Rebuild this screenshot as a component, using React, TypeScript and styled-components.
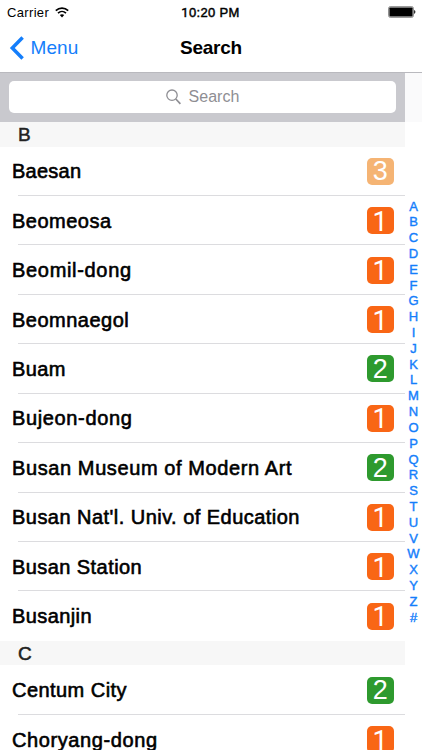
import React from 'react';
import styled, { createGlobalStyle } from 'styled-components';

const GlobalStyle = createGlobalStyle`
  *, *::before, *::after { box-sizing: border-box; }
  body {
    margin: 0;
    background: #fff;
    color: #000;
    font-family: 'Liberation Sans', Arial, sans-serif;
    overflow: hidden;
  }
`;

const Screen = styled.div`
  display: flex;
  flex-direction: column;
  width: 422px;
  height: 750px;
  overflow: hidden;
  background: #fff;
`;

const Top = styled.header`
  flex: none;
  height: 73px;
  border-bottom: 1px solid #b9b9be;
`;

const StatusBar = styled.div`
  display: grid;
  grid-template-columns: 1fr auto 1fr;
  align-items: center;
  height: 24px;
  padding: 0 6px 0 7px;
`;

const Carrier = styled.div`
  display: flex;
  align-items: center;
  gap: 6px;
  font-size: 13px;
  letter-spacing: 0.34px;
`;

const Time = styled.div`
  margin-left: -2px;
  font-size: 13px;
  letter-spacing: 0.35px;
  -webkit-text-stroke: 0.45px #000;
`;

const One = styled.span`
  font-family: Roboto, sans-serif;
`;

const BatterySlot = styled.div`
  display: flex;
  justify-content: flex-end;
`;

const NavBar = styled.nav`
  display: grid;
  grid-template-columns: 1fr auto 1fr;
  align-items: center;
  height: 48px;
  padding: 0 9px;
`;

const Back = styled.a`
  display: flex;
  align-items: center;
  gap: 6.5px;
  color: #147efb;
  font-size: 19px;
  letter-spacing: 0.1px;
`;

const Title = styled.h1`
  margin: 0;
  font-size: 19px;
  line-height: 22px;
  font-weight: 700;
  letter-spacing: -0.25px;
`;

const Body = styled.div`
  display: flex;
  flex: 1;
  min-height: 0;
`;

const List = styled.main`
  width: 405px;
  overflow: hidden;
`;

const SearchBar = styled.div`
  height: 49px;
  padding: 8px 9px 9px;
  background: #c9c9ce;
`;

const SearchField = styled.div`
  display: flex;
  align-items: center;
  justify-content: center;
  gap: 8px;
  height: 32px;
  border-radius: 5px;
  background: #fff;
  color: #8e8e93;
  font-size: 16px;
  letter-spacing: 0.05px;
`;

const SectionHeader = styled.h2`
  height: 24.5px;
  margin: 0;
  padding-left: 18px;
  background: #f7f7f7;
  color: #222;
  font-size: 19px;
  line-height: 26px;
  font-weight: 400;
  -webkit-text-stroke: 0.5px #222;
`;

const Station = styled.div`
  position: relative;
  display: flex;
  align-items: center;
  justify-content: space-between;
  height: 49.45px;
  padding: 0 11.3px 0 12px;

  &:not(:last-child)::after {
    content: '';
    position: absolute;
    right: 0;
    bottom: 0;
    left: 18px;
    height: 1px;
    background: #dcdcdf;
  }
`;

const Name = styled.span<{ $spacing?: number }>`
  font-size: 20px;
  line-height: 24px;
  letter-spacing: ${(p) => p.$spacing ?? 0.5}px;
  white-space: nowrap;
  -webkit-text-stroke: 0.6px #000;
`;

const lineColors: Record<number, string> = { 1: '#f96615', 2: '#2e9a2e', 3: '#f5b474' };

const Badge = styled.span<{ $line: number }>`
  display: flex;
  align-items: center;
  justify-content: center;
  width: 27px;
  height: 27px;
  padding-top: ${(p) => (p.$line === 1 ? 3 : 1)}px;
  border-radius: 5px;
  background: ${(p) => lineColors[p.$line]};
  color: #fff;
  font-family: ${(p) => (p.$line === 1 ? 'Roboto' : "'Liberation Sans'")}, sans-serif;
  font-size: 27px;
  line-height: 27px;
`;

const IndexColumn = styled.aside`
  flex: 1;
`;

const IndexTop = styled.div`
  height: 49px;
  background: #fafafb;
`;

const IndexLetters = styled.div`
  display: flex;
  flex-direction: column;
  align-items: center;
  padding-top: 76.5px;
  color: #147efb;
  font-size: 13px;
  line-height: 15.81px;
  -webkit-text-stroke: 0.4px #147efb;
`;

const WifiIcon = () => (
  <svg width="14" height="11" viewBox="0 0 14 11" fill="none" stroke="#000">
    <path d="M.8 3.7C4.4.2 9.6.2 13.2 3.7" strokeWidth="1.7" />
    <path d="M3 6.1C5.3 3.9 8.7 3.9 11 6.1" strokeWidth="1.6" />
    <path d="M7 10.4 4.8 8.1C6 6.9 8 6.9 9.2 8.1Z" fill="#000" stroke="none" />
  </svg>
);

const BatteryIcon = () => (
  <svg width="28" height="12" viewBox="0 0 28 12">
    <rect x=".6" y=".7" width="24.8" height="10.6" rx="1.6" fill="#fff" stroke="#777" strokeWidth=".9" />
    <rect x="1.4" y="1.5" width="23.2" height="9" rx=".8" fill="#000" />
    <path d="M26.2 4.1c1.6.7 1.6 3.1 0 3.8Z" fill="#000" />
  </svg>
);

const BackIcon = () => (
  <svg width="15" height="24" viewBox="0 0 15 24" fill="none" stroke="#147efb" strokeWidth="3.5">
    <path d="M13.6 1.4 3.3 11.9l10.3 10.5" />
  </svg>
);

const SearchIcon = () => (
  <svg width="15" height="16" viewBox="0 0 15 16" fill="none" stroke="#8e8e93">
    <circle cx="6" cy="6.2" r="5.2" strokeWidth="1.3" />
    <path d="m9.8 10 4.6 4.8" strokeWidth="1.7" />
  </svg>
);

type StationData = { name: string; line: number; spacing?: number };

const sections: { letter: string; stations: StationData[] }[] = [
  {
    letter: 'B',
    stations: [
      { name: 'Baesan', line: 3, spacing: 0.25 },
      { name: 'Beomeosa', line: 1 },
      { name: 'Beomil-dong', line: 1, spacing: 0.68 },
      { name: 'Beomnaegol', line: 1 },
      { name: 'Buam', line: 2, spacing: 0.4 },
      { name: 'Bujeon-dong', line: 1, spacing: 0.64 },
      { name: 'Busan Museum of Modern Art', line: 2, spacing: 0.6 },
      { name: "Busan Nat'l. Univ. of Education", line: 1, spacing: 0.46 },
      { name: 'Busan Station', line: 1, spacing: 0.43 },
      { name: 'Busanjin', line: 1, spacing: 0.4 },
    ],
  },
  {
    letter: 'C',
    stations: [
      { name: 'Centum City', line: 2, spacing: 0.45 },
      { name: 'Choryang-dong', line: 1, spacing: 0.6 },
    ],
  },
];

export default function App() {
  return (
    <>
      <GlobalStyle />
      <Screen>
        <Top>
          <StatusBar>
            <Carrier>
              Carrier
              <WifiIcon />
            </Carrier>
            <Time>
              <One>1</One>0:20 PM
            </Time>
            <BatterySlot>
              <BatteryIcon />
            </BatterySlot>
          </StatusBar>
          <NavBar>
            <Back>
              <BackIcon />
              Menu
            </Back>
            <Title>Search</Title>
          </NavBar>
        </Top>
        <Body>
          <List>
            <SearchBar>
              <SearchField>
                <SearchIcon />
                Search
              </SearchField>
            </SearchBar>
            {sections.map((section) => (
              <section key={section.letter}>
                <SectionHeader>{section.letter}</SectionHeader>
                {section.stations.map((s) => (
                  <Station key={s.name}>
                    <Name $spacing={s.spacing}>{s.name}</Name>
                    <Badge $line={s.line}>{s.line}</Badge>
                  </Station>
                ))}
              </section>
            ))}
          </List>
          <IndexColumn>
            <IndexTop />
            <IndexLetters>
              {'ABCDEFGHIJKLMNOPQRSTUVWXYZ#'.split('').map((c) => (
                <span key={c}>{c}</span>
              ))}
            </IndexLetters>
          </IndexColumn>
        </Body>
      </Screen>
    </>
  );
}
